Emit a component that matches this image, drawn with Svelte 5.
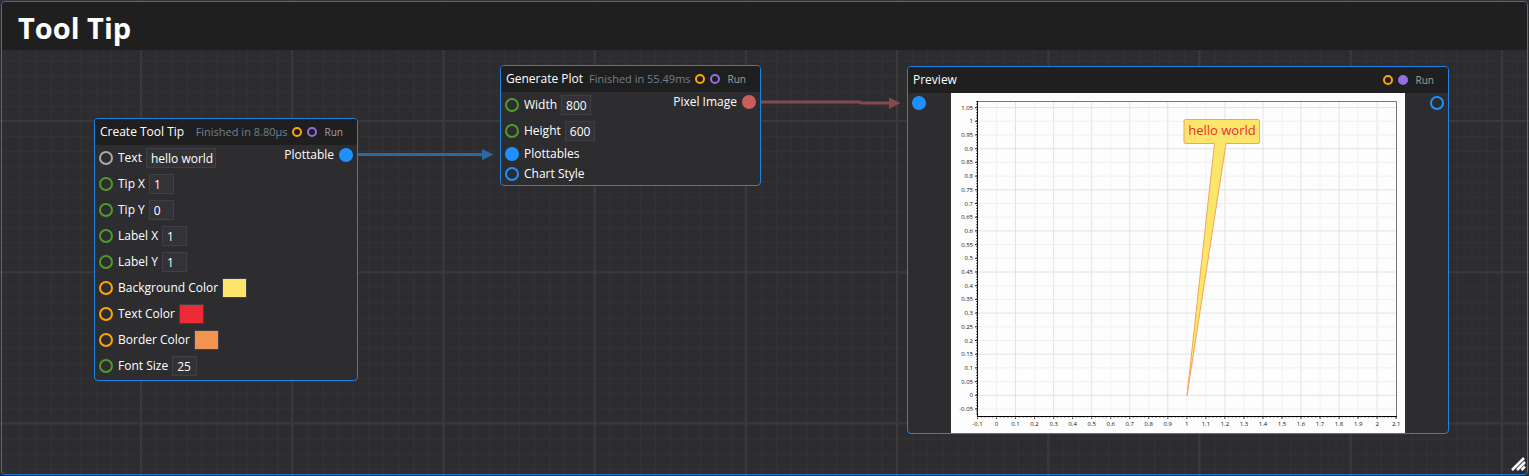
<script>
  const nodes = [
    {
      title: "Create Tool Tip",
      status: "Finished in 8.80µs",
      x: 94,
      y: 118,
      width: 264,
      inputs: [
        { name: "Text", color: "#a9a9a9", value: "hello world", width: 70 },
        { name: "Tip X", color: "#4f9a2e", value: "1", width: 25 },
        { name: "Tip Y", color: "#4f9a2e", value: "0", width: 25 },
        { name: "Label X", color: "#4f9a2e", value: "1", width: 25 },
        { name: "Label Y", color: "#4f9a2e", value: "1", width: 25 },
        { name: "Background Color", color: "#ffa500", swatch: "#fbe66a" },
        { name: "Text Color", color: "#ffa500", swatch: "#ec2b36" },
        { name: "Border Color", color: "#ffa500", swatch: "#f29350" },
        { name: "Font Size", color: "#4f9a2e", value: "25", width: 25 },
      ],
      outputs: [{ name: "Plottable", color: "#1e90ff", filled: true }],
    },
    {
      title: "Generate Plot",
      status: "Finished in 55.49ms",
      x: 500,
      y: 65,
      width: 261,
      inputs: [
        { name: "Width", color: "#4f9a2e", value: "800", width: 30 },
        { name: "Height", color: "#4f9a2e", value: "600", width: 30 },
        { name: "Plottables", color: "#1e90ff", filled: true },
        { name: "Chart Style", color: "#1e90ff" },
      ],
      outputs: [{ name: "Pixel Image", color: "#cd5c5c", filled: true }],
    },
    {
      title: "Preview",
      x: 907,
      y: 66,
      width: 542,
      done: true,
      plot: true,
      inputs: [{ name: "", color: "#1e90ff", filled: true }],
      outputs: [{ name: "", color: "#1e90ff" }],
    },
  ];

  const xTicks = Array.from({ length: 23 }, (_, i) => ({
    label: String((i - 1) / 10),
    pos: 26.5 + i * 19.03,
    strong: i < 12 ? i % 2 === 0 : i % 2 === 1,
  }));
  const yTicks = Array.from({ length: 23 }, (_, i) => ({
    label: String((i - 1) / 20),
    pos: 316 - i * 13.7,
    strong: (i - 1) % 3 === 0,
  }));
</script>

<svelte:head>
  <title>Tool Tip</title>
</svelte:head>

{#snippet port(p)}
  <span class="port" class:filled={p.filled} style="--color: {p.color}"></span>
{/snippet}

<main>
  <svg class="grid" aria-hidden="true">
    <defs>
      <pattern id="minor" x="141" y="121" width="15.12" height="15.12" patternUnits="userSpaceOnUse">
        <path d="M0.5 0V16M0 0.5H16" stroke="#333336" fill="none" />
      </pattern>
      <pattern id="major" x="140" y="120" width="151.2" height="151.2" patternUnits="userSpaceOnUse">
        <path d="M1 0V152M0 1H152" stroke="#3a3a3d" stroke-width="2" fill="none" />
      </pattern>
    </defs>
    <rect width="100%" height="100%" fill="url(#minor)" />
    <rect width="100%" height="100%" fill="url(#major)" />
  </svg>

  <section class="group">
    <h1>Tool Tip</h1>
    <svg class="grip" viewBox="0 0 16 14" aria-hidden="true">
      <path d="M1 13L13 1M6 13L14 5M10.500 13L14 9.500" stroke="#fff" stroke-width="2.500" />
    </svg>
  </section>

  <svg class="wires" aria-hidden="true">
    <path d="M357 154.500H484" stroke="#2d68a4" stroke-width="3" />
    <path d="M482 149L493.500 154.500L482 160Z" fill="#2d68a4" />
    <path d="M761 102H860L861 103H891" stroke="#86494d" stroke-width="3" fill="none" />
    <path d="M889 97.500L900.500 103L889 109Z" fill="#86494d" />
  </svg>

  {#each nodes as node}
    <article class="node" style="left: {node.x}px; top: {node.y}px; width: {node.width}px">
      <header>
        <h2>{node.title}</h2>
        {#if node.status}<span class="status">{node.status}</span>{/if}
        <div class="run">
          <span class="dot" style="--color: #ffa500"></span>
          <span class="dot" class:done={node.done} style="--color: #9370db"></span>
          <button type="button">Run</button>
        </div>
      </header>
      <div class="body">
        <ul class="inputs">
          {#each node.inputs as input}
            <li class:tall={input.value || input.swatch}>
              {@render port(input)}
              {#if input.value}
                <label>
                  {input.name}
                  <input type="text" value={input.value} style="width: {input.width}px" />
                </label>
              {:else if input.swatch}
                <label>
                  {input.name}
                  <input type="color" value={input.swatch} />
                </label>
              {:else if input.name}
                <span>{input.name}</span>
              {/if}
            </li>
          {/each}
        </ul>
        {#if node.plot}
          <svg class="plot" viewBox="0 0 454 340" role="img" aria-label="Plot preview">
            <rect width="454" height="340" fill="#fdfdfd" />
            {#each xTicks as t}
              <line x1={t.pos} x2={t.pos} y1="8" y2="323" stroke={t.strong ? "#e2e2e2" : "#f2f2f2"} />
              <line x1={t.pos} x2={t.pos} y1="323" y2="326" stroke="#333" />
              <text x={t.pos} y="333" text-anchor="middle">{t.label}</text>
            {/each}
            {#each yTicks as t}
              <line x1="26" x2="445" y1={t.pos} y2={t.pos} stroke={t.strong ? "#e2e2e2" : "#f0f0f0"} />
              <line x1="24" x2="27" y1={t.pos} y2={t.pos} stroke="#222" />
              <text x="22" y={t.pos} dy="2" text-anchor="end">{t.label}</text>
            {/each}
            <path d="M26 8.500H445.500V323" stroke="#777" fill="none" />
            <path d="M26.500 8V323" stroke="#111" />
            <path d="M25.500 8V323" stroke="#555" stroke-dasharray="1 1.740" />
            <path d="M26 323.500H446" stroke="#000" />
            <path d="M26 324.500H446" stroke="#999" stroke-dasharray="1 2.800" />
            <path
              d="M234.500 26.500H307Q308.500 26.500 308.500 28V49Q308.500 50.500 307 50.500H275L236 302.500L263.500 50.500H234.500Q233 50.500 233 49V28Q233 26.500 234.500 26.500Z"
              fill="#fbe66a"
              stroke="#f2a45c"
              stroke-width="1"
            />
            <text class="tip" x="271" y="42" text-anchor="middle">hello world</text>
          </svg>
        {/if}
        <ul class="outputs">
          {#each node.outputs as output}
            <li>
              {#if output.name}<span>{output.name}</span>{/if}
              {@render port(output)}
            </li>
          {/each}
        </ul>
      </div>
    </article>
  {/each}
</main>

<style>
  :global(body) {
    background: #2d2d30;
  }
  main {
    position: relative;
    display: flex;
    box-sizing: border-box;
    min-height: 100vh;
    padding: 1px;
    overflow: hidden;
    color: #fff;
    font: 12px/16px "Open Sans", "Noto Sans", sans-serif;
  }
  .grid,
  .wires {
    position: absolute;
    inset: 0;
    width: 100%;
    height: 100%;
  }

  .group {
    position: relative;
    flex: 1;
    border: 1px solid #1e78d2;
    border-radius: 4px;
  }
  h1 {
    margin: 0;
    padding: 6px 16px 2px;
    border-radius: 3px 3px 0 0;
    background: #1f1f1f;
    font-size: 29px;
    font-weight: 700;
    line-height: 40px;
  }
  .grip {
    position: absolute;
    right: 0;
    bottom: 3px;
    width: 16px;
    height: 14px;
  }

  .node {
    position: absolute;
    box-sizing: border-box;
    border: 1px solid #1e82e6;
    border-radius: 4px;
    background: #2d2d30;
  }
  header {
    display: flex;
    align-items: center;
    height: 26px;
    padding: 0 14px 0 5px;
    border-radius: 3px 3px 0 0;
    background: #1f1f1f;
    white-space: nowrap;
  }
  h2 {
    margin: 0;
    font-size: 12px;
    font-weight: 400;
  }
  .status {
    margin: 0 4px 0 auto;
    color: #708090;
    font-size: 11px;
  }
  .run {
    display: flex;
    align-items: center;
    gap: 5px;
  }
  h2 + .run {
    margin-left: auto;
  }
  .dot {
    box-sizing: border-box;
    width: 10px;
    height: 10px;
    border: 2px solid var(--color);
    border-radius: 50%;
  }
  .done {
    background: var(--color);
  }
  button {
    margin: 0 0 0 3px;
    padding: 0;
    border: 0;
    background: none;
    color: #a0a0a0;
    font: 10px/14px "Open Sans", "Noto Sans", sans-serif;
  }

  .body {
    display: flex;
    justify-content: space-between;
  }
  ul {
    margin: 0;
    padding: 0 4px;
    list-style: none;
  }
  li {
    display: flex;
    align-items: center;
    gap: 5px;
    height: 20px;
  }
  .tall {
    height: 26px;
  }
  .inputs {
    padding-bottom: 1px;
  }
  .outputs li {
    justify-content: flex-end;
  }
  .port {
    box-sizing: border-box;
    width: 14px;
    height: 14px;
    border: 2px solid var(--color);
    border-radius: 50%;
  }
  .filled {
    background: var(--color);
  }
  label {
    display: flex;
    align-items: center;
    gap: 4px;
  }
  input {
    box-sizing: border-box;
    height: 20px;
    margin: 0;
    padding: 0 3px;
    border: 1px solid #3f3f46;
    border-radius: 0;
    background: #333337;
    color: #fff;
    font: inherit;
  }
  input[type="text"] {
    padding: 0 0 0 4px;
  }
  input[type="color"] {
    width: 25px;
    padding: 0;
  }
  input[type="color"]::-webkit-color-swatch-wrapper {
    padding: 0;
  }
  input[type="color"]::-webkit-color-swatch {
    border: 0;
    border-radius: 0;
  }

  .plot {
    width: 454px;
    height: 340px;
  }
  .plot text {
    fill: #111;
    font-size: 6px;
  }
  .plot .tip {
    fill: #ec2b36;
    font-size: 13px;
  }
</style>
